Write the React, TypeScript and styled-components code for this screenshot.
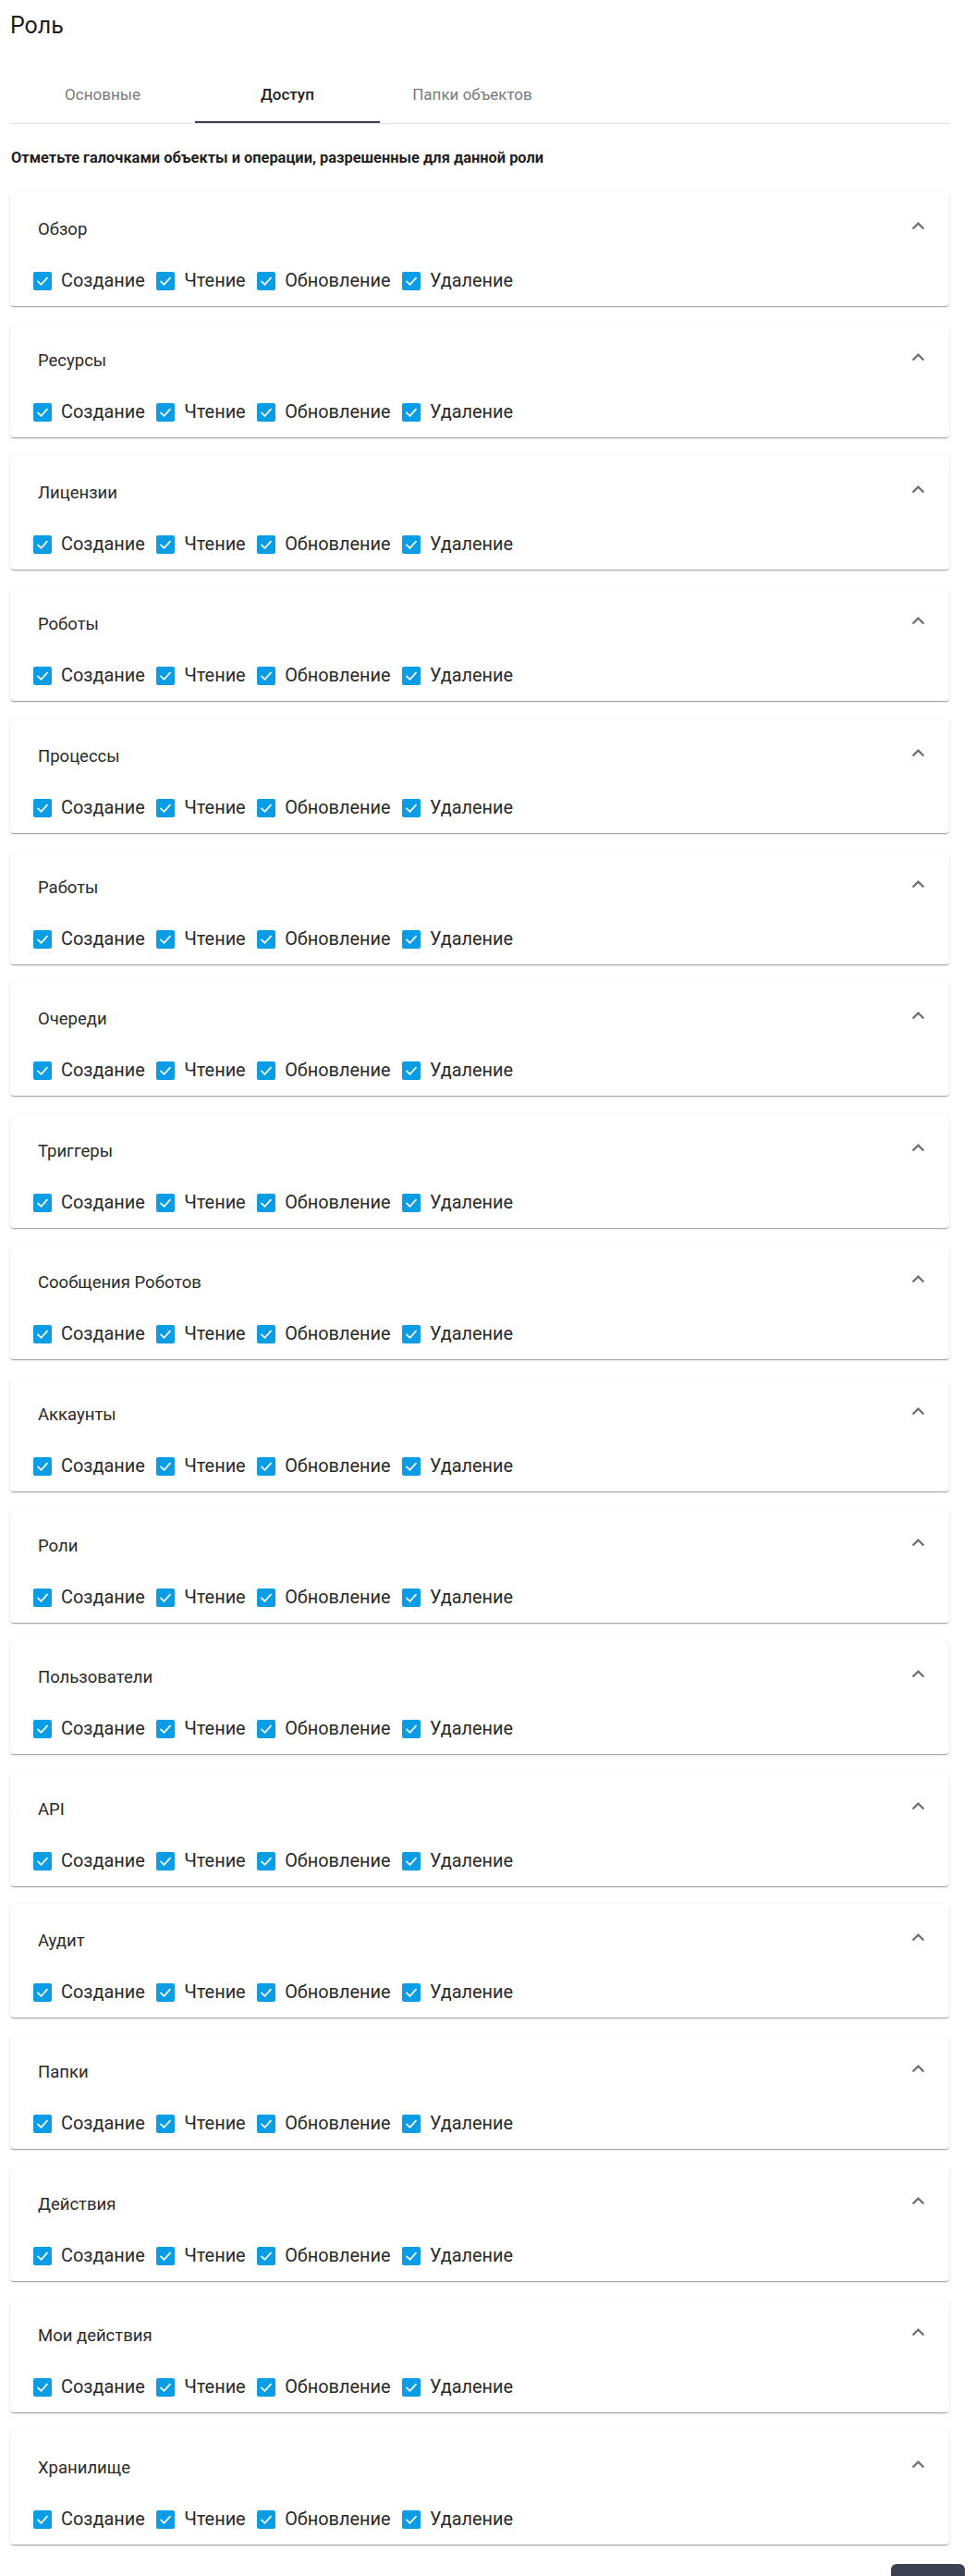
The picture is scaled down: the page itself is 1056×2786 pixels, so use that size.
import React from 'react';
import styled, { createGlobalStyle } from 'styled-components';

const GlobalStyle = createGlobalStyle`
  html, body { margin: 0; padding: 0; background: #ffffff; }
  body {
    font-family: Roboto, "Noto Sans", "Liberation Sans", sans-serif;
    color: #212121;
    -webkit-font-smoothing: antialiased;
  }
`;

const Page = styled.div`
  width: 1016px;
  padding: 12px 0 0 11px;
`;

const Title = styled.h1`
  margin: 0;
  font-size: 25px;
  font-weight: 400;
  line-height: 32px;
  color: #1c1c1c;
`;

const Tabs = styled.div`
  display: flex;
  margin-top: 29px;
  border-bottom: 1px solid #e0e0e0;
`;

const Tab = styled.div<{ $active?: boolean }>`
  box-sizing: border-box;
  width: 200px;
  height: 60px;
  display: flex;
  align-items: center;
  justify-content: center;
  font-size: 17px;
  font-weight: ${(p) => (p.$active ? 500 : 400)};
  color: ${(p) => (p.$active ? '#222222' : '#7a7a7a')};
  border-bottom: 2px solid ${(p) => (p.$active ? '#3c4252' : 'transparent')};
`;

const Hint = styled.p`
  margin: 27px 0 0 1px;
  font-size: 16.4px;
  line-height: 20px;
  font-weight: 700;
  color: #1f1f1f;
`;

const CardList = styled.div`
  display: flex;
  flex-direction: column;
  gap: 19.4px;
  margin-top: 27px;
`;

const Card = styled.section`
  background: #ffffff;
  border-radius: 4px;
  box-shadow: 0 2px 1px -1px rgba(0, 0, 0, 0.2), 0 1px 1px 0 rgba(0, 0, 0, 0.14),
    0 1px 3px 0 rgba(0, 0, 0, 0.12);
`;

const CardHeader = styled.div`
  height: 80px;
  display: flex;
  align-items: center;
  justify-content: space-between;
  padding: 0 20px 0 30px;
`;

const CardTitle = styled.span`
  font-size: 18.5px;
  color: #2a2a2a;
`;

const Chevron = styled.svg`
  width: 27px;
  height: 27px;
  margin-top: -7px;
  fill: #6f6f6f;
`;

const PermRow = styled.div`
  display: flex;
  align-items: center;
  gap: 12.5px;
  padding: 6px 0 17px 25px;
`;

const Perm = styled.label`
  display: flex;
  align-items: center;
  gap: 10px;
  font-size: 19.9px;
  line-height: 20px;
  color: #2a2a2a;
`;

const Box = styled.svg`
  width: 20px;
  height: 20px;
  flex: none;
`;

const Footer = styled.div`
  display: flex;
  justify-content: flex-end;
  margin-right: -17px;
  padding: 21px 0 20px 0;
`;

const SaveButton = styled.button`
  width: 80px;
  height: 40px;
  border: none;
  border-radius: 6px;
  background: #3c4252;
  color: #ffffff;
  font-family: inherit;
  font-size: 13px;
  padding-top: 16px;
`;

const sections = [
  'Обзор',
  'Ресурсы',
  'Лицензии',
  'Роботы',
  'Процессы',
  'Работы',
  'Очереди',
  'Триггеры',
  'Сообщения Роботов',
  'Аккаунты',
  'Роли',
  'Пользователи',
  'API',
  'Аудит',
  'Папки',
  'Действия',
  'Мои действия',
  'Хранилище',
];

const ops = ['Создание', 'Чтение', 'Обновление', 'Удаление'];

const CheckIcon = () => (
  <Box viewBox="0 0 20 20">
    <rect x="0" y="0" width="20" height="20" rx="2" fill="#0a9de6" />
    <path d="M5 10.4 L8.6 13.8 L15 6.6" fill="none" stroke="#ffffff" strokeWidth="1.7" strokeLinecap="round" strokeLinejoin="round" />
  </Box>
);

export default function App() {
  return (
    <>
      <GlobalStyle />
      <Page>
        <Title>Роль</Title>
        <Tabs>
          <Tab>Основные</Tab>
          <Tab $active>Доступ</Tab>
          <Tab>Папки объектов</Tab>
        </Tabs>
        <Hint>Отметьте галочками объекты и операции, разрешенные для данной роли</Hint>
        <CardList>
          {sections.map((s) => (
            <Card key={s}>
              <CardHeader>
                <CardTitle>{s}</CardTitle>
                <Chevron viewBox="0 0 24 24">
                  <path d="M12 8l-6 6 1.41 1.41L12 10.83l4.59 4.58L18 14z" />
                </Chevron>
              </CardHeader>
              <PermRow>
                {ops.map((o) => (
                  <Perm key={o}>
                    <CheckIcon />
                    {o}
                  </Perm>
                ))}
              </PermRow>
            </Card>
          ))}
        </CardList>
        <Footer>
          <SaveButton>Сохранить</SaveButton>
        </Footer>
      </Page>
    </>
  );
}
